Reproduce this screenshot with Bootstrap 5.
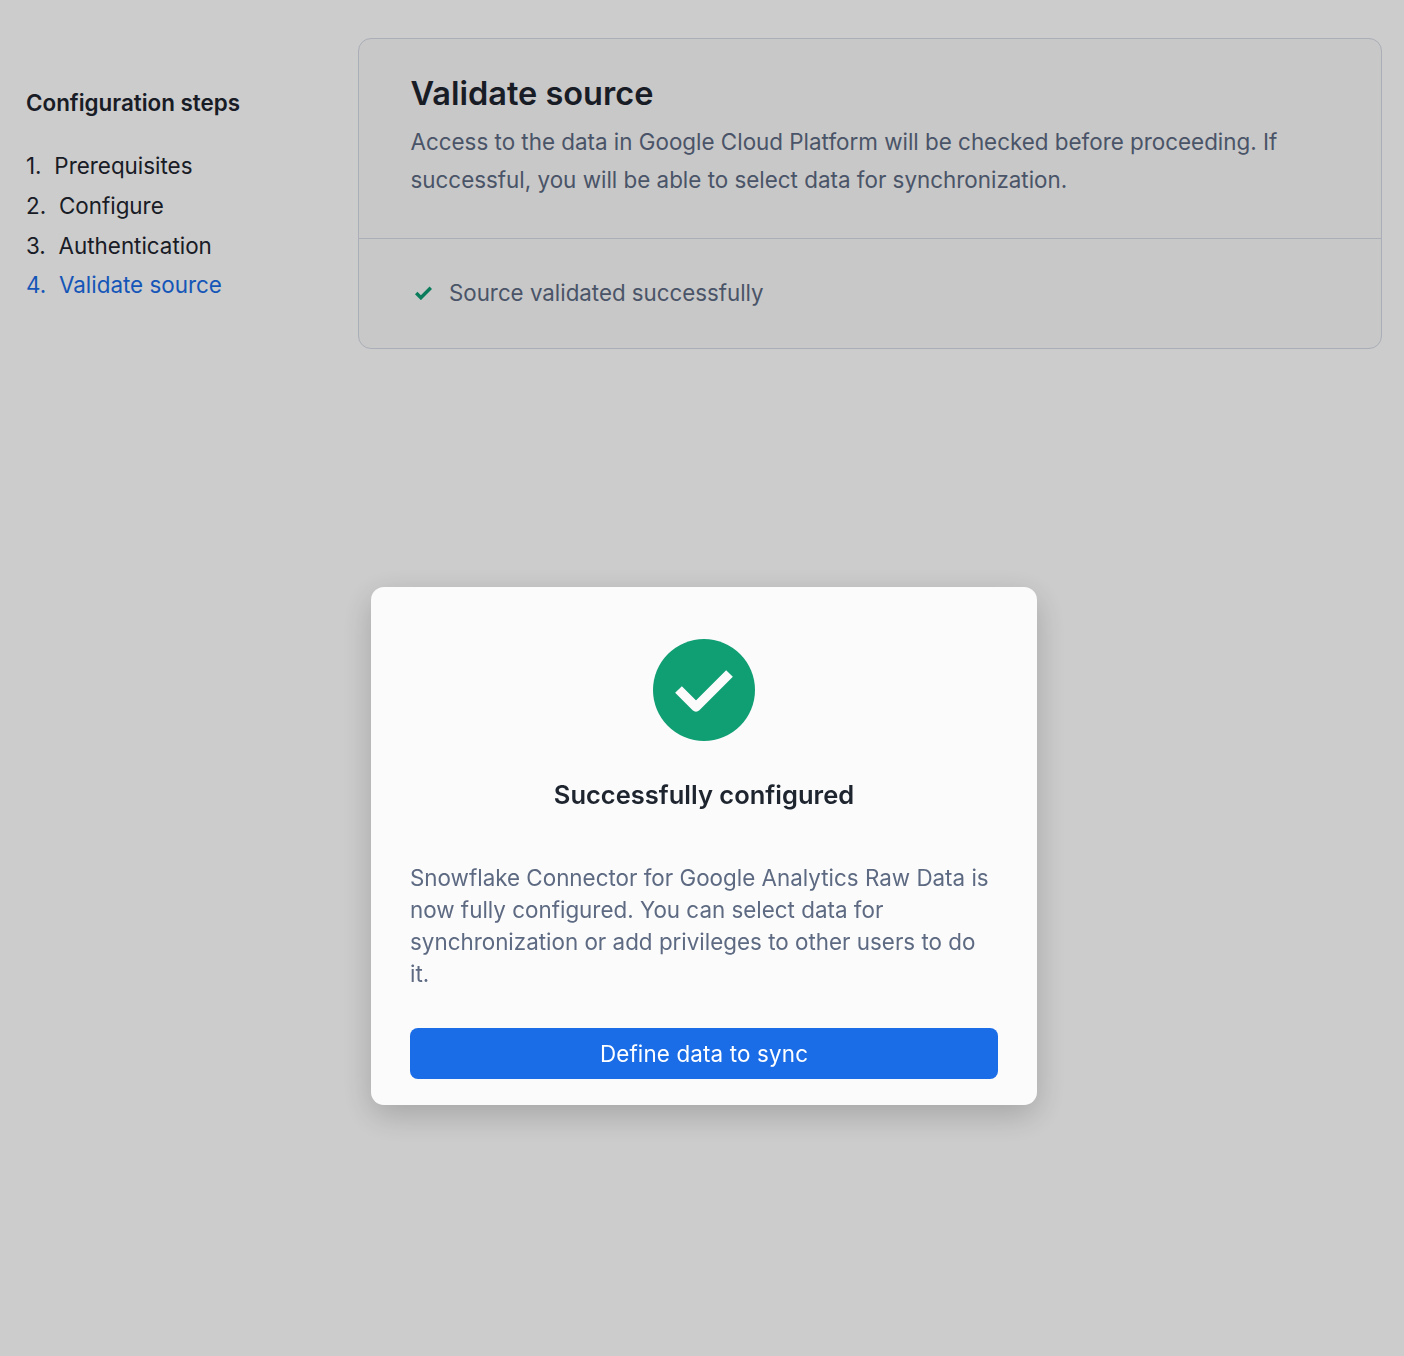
<!doctype html>
<html lang="en">
<head>
<meta charset="utf-8">
<title>Validate source</title>
<link href="https://cdn.jsdelivr.net/npm/bootstrap@5.3.0/dist/css/bootstrap.min.css" rel="stylesheet">
<style>
html, body { height: 100%; }
body { font-family: Inter, "Liberation Sans", sans-serif; background: #fff; color: #1e252f; overflow: hidden; letter-spacing: 0; }
.page-wrap { padding: 38px 22px 0 26px; gap: 0; }
.steps-side { width: 332px; flex: none; padding-top: 51px; }
.steps-title { font-size: 22.4px; font-weight: 600; line-height: 28px; margin: 0 0 29px; color: #1e252f; }
.steps-list { font-size: 22.4px; line-height: 39.8px; color: #1e252f; }
.steps-list .step-num { margin-right: 12.8px; }
.steps-list .step-on { color: #1a6ce7; }
.panel-box { background: #fafafb; border: 1px solid #d5dae4; border-radius: 13px; height: 311px; }
.panel-head { padding: 33px 51.5px 0; height: 200px; border-bottom: 1px solid #d5dae4; }
.panel-title { font-size: 32.5px; font-weight: 600; line-height: 44px; margin: 0 0 7px; color: #1e252f; }
.panel-desc { font-size: 22.4px; line-height: 38px; color: #5d6a82; margin: 0; }
.panel-body-row { padding: 35px 56px 0; gap: 17px; font-size: 22.3px; line-height: 38px; color: #5d6a82; }
.dim-layer { position: fixed; inset: 0; background: rgba(0,0,0,.2); padding: 336px 0 0 4px; }
.done-box { width: 666px; height: 518px; background: #fbfbfc; border-radius: 13px; padding: 52px 39px 0; box-shadow: 0 10px 32px rgba(0,0,0,.2); }
.done-icon { display: block; margin: 0 auto 34px; }
.done-title { font-size: 25.5px; font-weight: 600; line-height: 40px; margin: 0 0 47px; text-align: center; color: #1e252f; }
.done-text { font-size: 22.4px; line-height: 32px; color: #5d6a82; margin: 0 0 38px; }
.done-btn { display: block; width: 100%; height: 51px; background: #1a6ce7; border: 0; border-radius: 8px; color: #fff; font-size: 22.4px; letter-spacing: .15px; line-height: 50px; padding: 0; }
.done-btn:hover { background: #1a6ce7; color: #fff; }
</style>
</head>
<body>
<div class="d-flex page-wrap">
  <aside class="steps-side">
    <h2 class="steps-title">Configuration steps</h2>
    <ol class="list-unstyled m-0 steps-list">
      <li><span class="step-num">1.</span>Prerequisites</li>
      <li><span class="step-num">2.</span>Configure</li>
      <li><span class="step-num">3.</span>Authentication</li>
      <li class="step-on"><span class="step-num">4.</span>Validate source</li>
    </ol>
  </aside>
  <main class="flex-grow-1 panel-box">
    <div class="panel-head">
      <h1 class="panel-title">Validate source</h1>
      <p class="panel-desc">Access to the data in Google Cloud Platform will be checked before proceeding. If successful, you will be able to select data for synchronization.</p>
    </div>
    <div class="d-flex align-items-center panel-body-row">
      <svg width="17" height="14" viewBox="0 0 17 14" aria-hidden="true"><path d="M1.2 7l4.7 4.7L15.8 1.8" fill="none" stroke="#0f9d74" stroke-width="3.5"/></svg>
      <span>Source validated successfully</span>
    </div>
  </main>
</div>
<div class="dim-layer d-flex align-items-center justify-content-center">
  <div class="done-box">
    <svg class="done-icon" width="102" height="102" viewBox="0 0 102 102" aria-hidden="true">
      <circle cx="51" cy="51" r="51" fill="#109e73"/>
      <path d="M25.5 50.5L43 68 76.5 34.5" fill="none" stroke="#fbfbfc" stroke-width="9.5" stroke-linejoin="round"/>
    </svg>
    <h2 class="done-title">Successfully configured</h2>
    <p class="done-text">Snowflake Connector for Google Analytics Raw Data is now fully configured. You can select data for synchronization or add privileges to other users to do it.</p>
    <button type="button" class="btn done-btn">Define data to sync</button>
  </div>
</div>
<script src="https://cdn.jsdelivr.net/npm/bootstrap@5.3.0/dist/js/bootstrap.bundle.min.js"></script>
</body>
</html>
